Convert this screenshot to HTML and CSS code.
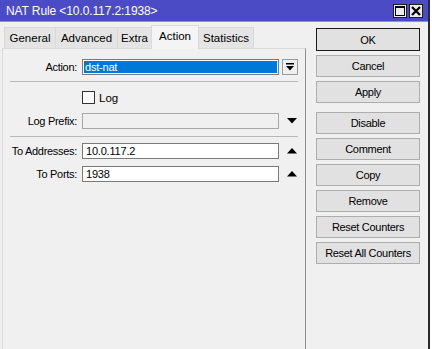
FILE: index.html
```html
<!DOCTYPE html>
<html>
<head>
<meta charset="utf-8">
<link rel="stylesheet" href="styles.css">
</head>
<body>
<div class="window">
  <div class="titlebar">
    <span class="title">NAT Rule &lt;10.0.117.2:1938&gt;</span>
    <div class="tbtns">
      <span class="tbtn"><svg width="10" height="10" viewBox="0 0 10 10"><rect x="0.5" y="0.5" width="9" height="9" fill="none" stroke="#000" stroke-width="1"/><rect x="0" y="0" width="10" height="2" fill="#000"/></svg></span>
      <span class="tbtn"><svg width="10" height="10" viewBox="0 0 10 10"><path d="M1 1 L9 9 M9 1 L1 9" stroke="#000" stroke-width="2.2"/></svg></span>
    </div>
  </div>
  <div class="content">
    <div class="left">
      <div class="tabs">
        <span class="tab t-general">General</span>
        <span class="tab t-adv">Advanced</span>
        <span class="tab t-extra">Extra</span>
        <span class="tab active t-action">Action</span>
        <span class="tab t-stats">Statistics</span>
      </div>
      <div class="panel">
        <div class="row">
          <span class="label">Action:</span>
          <span class="field select"><span class="sel">dst-nat</span></span>
          <span class="dd"><svg width="8" height="8" viewBox="0 0 8 8"><rect x="0" y="0" width="8" height="1.5" fill="#000"/><polygon points="0,3 8,3 4,7.5" fill="#000"/></svg></span>
        </div>
        <div class="sep"></div>
        <div class="row check-row">
          <span class="label"></span>
          <span class="checkbox"></span>
          <span class="check-label">Log</span>
        </div>
        <div class="row r-prefix">
          <span class="label">Log Prefix:</span>
          <span class="field disabled"></span>
          <span class="arrow"><svg width="10" height="6" viewBox="0 0 10 6"><polygon points="0,0 10,0 5,5.5" fill="#000"/></svg></span>
        </div>
        <div class="sep sep2"></div>
        <div class="row r-addr">
          <span class="label">To Addresses:</span>
          <span class="field">10.0.117.2</span>
          <span class="arrow"><svg width="10" height="6" viewBox="0 0 10 6"><polygon points="0,5.5 10,5.5 5,0" fill="#000"/></svg></span>
        </div>
        <div class="row r-ports">
          <span class="label">To Ports:</span>
          <span class="field">1938</span>
          <span class="arrow"><svg width="10" height="6" viewBox="0 0 10 6"><polygon points="0,5.5 10,5.5 5,0" fill="#000"/></svg></span>
        </div>
      </div>
    </div>
    <div class="right">
      <span class="btn ok">OK</span>
      <span class="btn">Cancel</span>
      <span class="btn">Apply</span>
      <span class="btn gap">Disable</span>
      <span class="btn">Comment</span>
      <span class="btn">Copy</span>
      <span class="btn">Remove</span>
      <span class="btn">Reset Counters</span>
      <span class="btn">Reset All Counters</span>
    </div>
  </div>
</div>
</body>
</html>
```

FILE: styles.css
```css
html, body {
  margin: 0;
  padding: 0;
  background: #ffffff;
}
body {
  font-family: "Liberation Sans", Arial, sans-serif;
  font-size: 11px;
  color: #000;
  width: 432px;
  height: 349px;
  overflow: hidden;
}
.window {
  width: 428px;
  height: 349px;
  background: #f0f0f0;
  border-right: 2px solid #2a2a2a;
  display: flex;
  flex-direction: column;
}
.titlebar {
  height: 22px;
  background: #4b4bc6;
  display: flex;
  align-items: center;
  justify-content: space-between;
  padding: 0 5px 0 6px;
  border-bottom: 1px solid #8c8cd8;
  box-sizing: border-box;
}
.title {
  color: #fff;
  font-size: 12px;
  letter-spacing: -0.1px;
}
.tbtns {
  display: flex;
  gap: 2px;
}
.tbtn {
  width: 14px;
  height: 14px;
  box-sizing: border-box;
  background: #ececec;
  border: 1px solid #1e1e1e;
  display: flex;
  align-items: center;
  justify-content: center;
}
.content {
  display: flex;
  flex: 1;
}
.left {
  margin-left: 2px;
  width: 304px;
  display: flex;
  flex-direction: column;
}
.tabs {
  display: flex;
  align-items: flex-end;
  height: 26px;
  padding-left: 2px;
}
.tab {
  height: 21px;
  box-sizing: border-box;
  border: 1px solid #d9d9d9;
  border-bottom: none;
  background: #e4e4e4;
  display: flex;
  align-items: center;
  justify-content: center;
  font-size: 11.5px;
  margin-right: -1px;
}
.t-general { width: 52px; }
.t-adv { width: 63px; }
.t-extra { width: 35px; }
.t-action { width: 48px; }
.t-stats { width: 56px; }
.tab.active {
  height: 24px;
  background: #f4f4f4;
  position: relative;
  z-index: 1;
  margin-bottom: -1px;
  align-items: flex-start;
  padding-top: 4px;
}
.panel {
  flex: 1;
  border: 1px solid #d9d9d9;
  border-right-color: #8e8e8e;
  border-bottom: none;
  background: #f0f0f0;
  padding-top: 10px;
}
.row {
  display: flex;
  align-items: center;
  height: 16px;
}
.label {
  width: 74px;
  text-align: right;
  margin-right: 5px;
  font-size: 11px;
  letter-spacing: -0.3px;
  flex-shrink: 0;
}
.field {
  width: 197px;
  height: 16px;
  box-sizing: border-box;
  border: 1px solid #7a7a7a;
  background: #fff;
  padding-left: 3px;
  display: flex;
  align-items: center;
  font-size: 11px;
  letter-spacing: -0.2px;
}
.field.select {
  padding: 1px;
}
.sel {
  flex: 1;
  height: 100%;
  background: #0078d7;
  color: #fff;
  display: flex;
  align-items: center;
  padding-left: 1px;
}
.field.disabled {
  background: #f0f0f0;
  border-color: #a8a8a8;
}
.dd {
  margin-left: 3px;
  width: 16px;
  height: 16px;
  box-sizing: border-box;
  border: 1px solid #9a9a9a;
  background: #f0f0f0;
  display: flex;
  align-items: center;
  justify-content: center;
}
.arrow {
  margin-left: 8px;
  width: 10px;
  height: 16px;
  display: flex;
  align-items: center;
}
.sep {
  margin: 6px 0 0 7px;
  width: 288px;
  height: 1px;
  background: #b8b8b8;
}
.check-row {
  margin-top: 9px;
  height: 13px;
}
.checkbox {
  width: 13px;
  height: 13px;
  box-sizing: border-box;
  border: 1px solid #333;
  background: #fff;
}
.check-label {
  margin-left: 4px;
  font-size: 11.5px;
}
.r-prefix { margin-top: 9px; }
.sep2 { margin-top: 7px; }
.r-addr { margin-top: 6px; }
.r-ports { margin-top: 7px; }
.right {
  margin-left: 10px;
  padding-top: 6px;
  width: 104px;
  display: flex;
  flex-direction: column;
  gap: 4px;
}
.btn {
  height: 22px;
  box-sizing: border-box;
  border: 1px solid #adadad;
  background: #e1e1e1;
  display: flex;
  align-items: center;
  justify-content: center;
  font-size: 11px;
  letter-spacing: -0.3px;
}
.btn.ok {
  height: 23px;
  border: 1px solid #1a1a1a;
  box-shadow: inset 0 0 0 1px #e1e1e1;
}
.btn.gap {
  margin-top: 5px;
}
```
